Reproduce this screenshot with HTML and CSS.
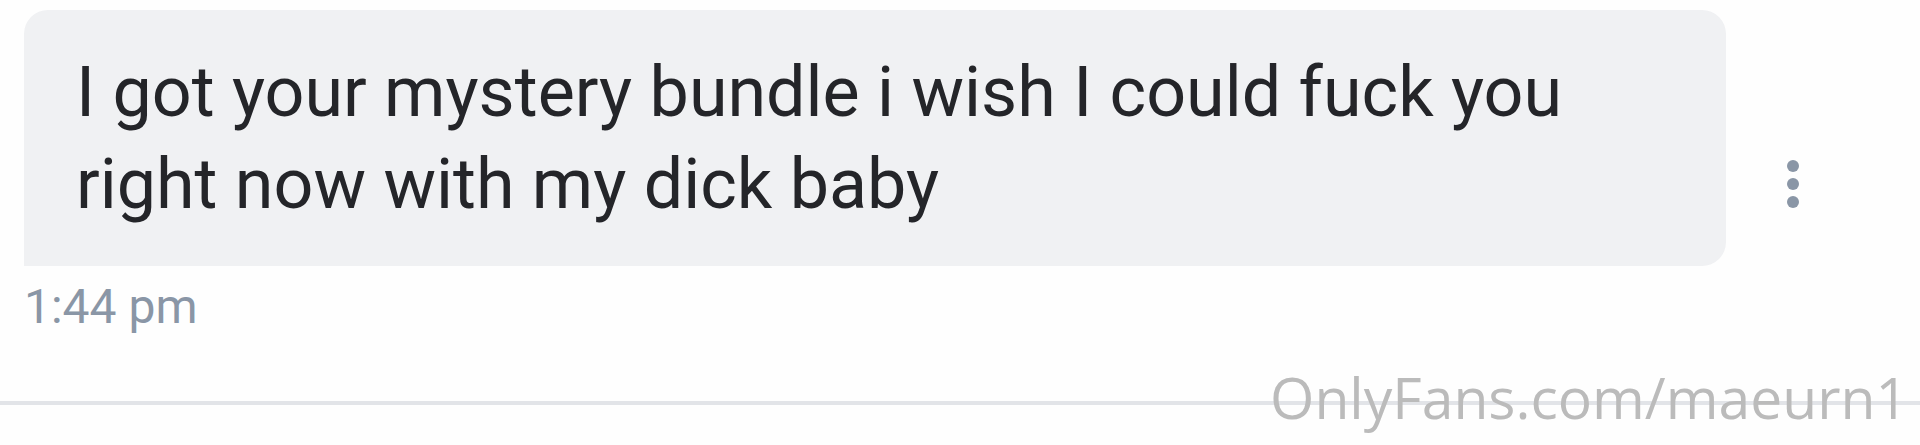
FILE: index.html
```
<!DOCTYPE html>
<html lang="en">
<head>
<meta charset="utf-8">
<title>Messages</title>
<link rel="stylesheet" href="styles.css">
</head>
<body>
<main class="chat">
  <article class="message">
    <div class="message-row">
      <p class="bubble">I got your mystery bundle i wish I could fuck you right now with my dick baby</p>
      <button class="more" type="button" aria-label="Message options">
        <svg class="more-icon" viewBox="0 0 14 50" aria-hidden="true"><circle cx="7" cy="7" r="6"/><circle cx="7" cy="25" r="6"/><circle cx="7" cy="43" r="6"/></svg>
      </button>
    </div>
    <time class="time">1:44 pm</time>
  </article>
  <footer class="footer">
    <span class="watermark">OnlyFans.com/maeurn1</span>
  </footer>
</main>
</body>
</html>
```
FILE: styles.css
```
body {
  margin: 0;
  background: #fefefe;
  font-family: Roboto, "Liberation Sans", sans-serif;
}

.message {
  padding: 10px 24px 0;
}

.message-row {
  display: flex;
  align-items: center;
}

.bubble {
  box-sizing: border-box;
  width: 1702px;
  max-width: 91%;
  margin: 0;
  padding: 36px 52px;
  border-radius: 24px 24px 24px 0;
  background: #f0f1f3;
  color: #242529;
  font-size: 70px;
  line-height: 92px;
}

.more {
  display: flex;
  margin-left: 60px;
  margin-top: 92px;
  padding: 0;
  border: 0;
  background: none;
}

.more-icon {
  width: 14px;
  height: 50px;
  fill: #8a96a6;
}

.time {
  display: block;
  margin-top: 11px;
  color: #8a96a6;
  font-size: 48px;
  line-height: 60px;
}

.footer {
  position: relative;
  display: flex;
  justify-content: flex-end;
  margin-top: 24px;
  padding: 0 12px 12px;
}

/* Divider that runs behind the watermark */
.footer::before {
  content: "";
  position: absolute;
  top: 40px;
  left: 0;
  right: 0;
  height: 4px;
  background: #e2e4e8;
}

.watermark {
  position: relative;
  color: #bbbbbb;
  font-family: "Open Sans", "Noto Sans", sans-serif;
  font-size: 57px;
  line-height: 72px;
}
```
